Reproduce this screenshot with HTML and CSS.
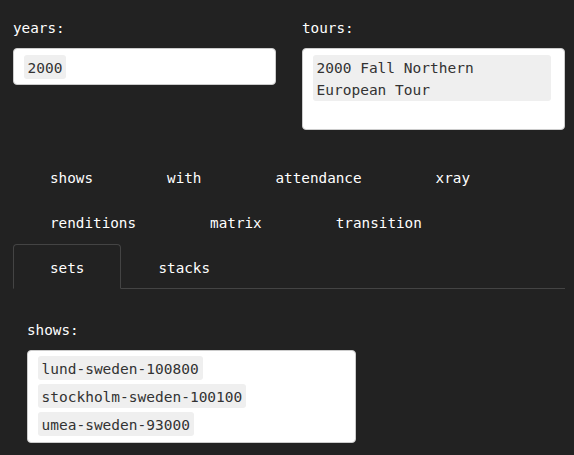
FILE: index.html
```html
<!DOCTYPE html>
<html>
<head>
<meta charset="utf-8">
<link rel="stylesheet" href="styles.css">
</head>
<body>
<div class="page">
  <div class="filters">
    <div class="field">
      <div class="label">years:</div>
      <div class="select">
        <span class="chip">2000</span>
        <span class="search"></span>
      </div>
    </div>
    <div class="field">
      <div class="label">tours:</div>
      <div class="select">
        <span class="chip">2000 Fall Northern European Tour</span>
        <span class="search"></span>
      </div>
    </div>
  </div>
  <ul class="tabs">
    <li class="tab">shows</li>
    <li class="tab">with</li>
    <li class="tab">attendance</li>
    <li class="tab">xray</li>
    <li class="tab">renditions</li>
    <li class="tab">matrix</li>
    <li class="tab">transition</li>
    <li class="tab active">sets</li>
    <li class="tab">stacks</li>
  </ul>
  <div class="pane">
    <div class="label">shows:</div>
    <div class="select shows">
      <span class="chip">lund-sweden-100800</span>
      <span class="chip">stockholm-sweden-100100</span>
      <span class="chip">umea-sweden-93000</span>
      <span class="search"></span>
    </div>
  </div>
</div>
</body>
</html>
```
FILE: styles.css
```css
html, body {
  margin: 0;
  padding: 0;
  background: #222222;
}
body {
  font-family: "DejaVu Sans Mono", monospace;
  font-size: 14.3px;
  line-height: 22px;
  color: #ffffff;
}
.page {
  padding: 17px 9px 0 13px;
}
.filters {
  display: grid;
  grid-template-columns: 263px 263px;
  column-gap: 26px;
  align-items: start;
}
.label {
  height: 22px;
  margin-bottom: 9px;
}
.select {
  background: #ffffff;
  border: 1px solid #cccccc;
  border-radius: 4px;
  padding: 5.5px 9.5px;
  display: flex;
  flex-wrap: wrap;
  align-items: flex-start;
  row-gap: 3.5px;
}
.chip {
  background: #efefef;
  color: #333333;
  border-radius: 3px;
  padding: 2px 4px 0 4px;
  font-size: 14.5px;
  line-height: 22px;
  margin-right: 4px;
}
.search {
  width: 100px;
  height: 19px;
}
.tabs {
  list-style: none;
  margin: 24px 0 0 0;
  padding: 0;
  display: flex;
  flex-wrap: wrap;
  row-gap: 1px;
  border-bottom: 1px solid #444444;
}
.tab {
  padding: 12px 36px 9px 36px;
  border: 1px solid transparent;
  border-radius: 4px 4px 0 0;
  margin-bottom: -1px;
  color: #ffffff;
}
.tab.active {
  border-color: #444444 #444444 #222222 #444444;
  background: #222222;
}
.pane {
  padding: 30px 0 0 14px;
}
.select.shows {
  width: 308px;
  row-gap: 4px;
}
```
